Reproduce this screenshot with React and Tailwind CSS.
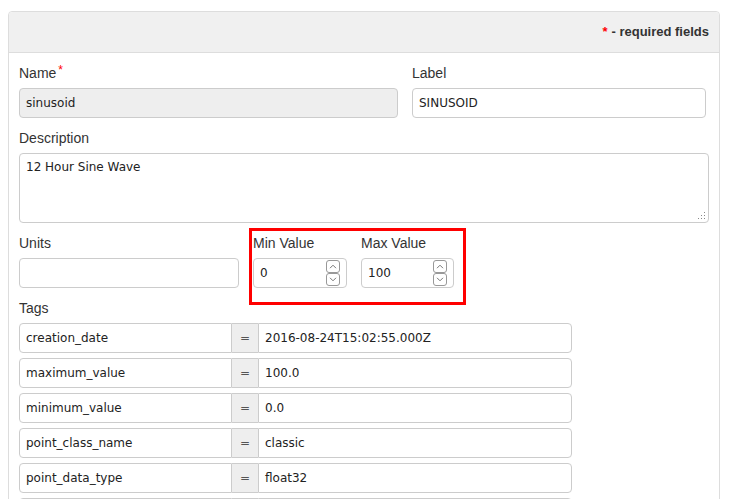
import React from "react";

const tags = [
  ["creation_date", "2016-08-24T15:02:55.000Z"],
  ["maximum_value", "100.0"],
  ["minimum_value", "0.0"],
  ["point_class_name", "classic"],
  ["point_data_type", "float32"],
  ["", ""],
];

const labelCls = "h-[20px] leading-[20px] mb-[5px] text-[14px] text-[#333]";
const inputCls =
  "h-[30px] border border-[#ccc] rounded-[4px] flex items-center px-[6px] text-[12px] text-[#222]";

function Chevron({ up }) {
  return (
    <svg width="8" height="5" viewBox="0 0 8 5" fill="none">
      <path
        d={up ? "M1 4.2 L4 1.2 L7 4.2" : "M1 0.8 L4 3.8 L7 0.8"}
        stroke="#777"
        strokeWidth="1"
      />
    </svg>
  );
}

function NumberField({ value, width }) {
  return (
    <div className={`${inputCls} ${width} justify-between pr-[6px]`}>
      <span>{value}</span>
      <div className="flex flex-col">
        <div className="w-[14px] h-[13px] border border-[#999] rounded-[3px] flex items-center justify-center">
          <Chevron up />
        </div>
        <div className="w-[14px] h-[13px] border border-[#999] rounded-[3px] flex items-center justify-center">
          <Chevron />
        </div>
      </div>
    </div>
  );
}

export default function App() {
  return (
    <div
      className="bg-white min-h-screen pt-[11px] pl-[8px]"
      style={{ fontFamily: '"Liberation Sans", Arial, sans-serif' }}
    >
      <div className="w-[712px] border border-[#ddd] rounded-[4px]">
        <div className="h-[41px] bg-[#f0f0f0] border-b border-[#ddd] rounded-t-[4px] px-[10px] flex items-center justify-end text-[13px] font-bold text-[#333]">
          <span className="text-[#f00] mr-[4px]">*</span>- required fields
        </div>

        <div className="pl-[10px] pr-[10px] pt-[10px] pb-[10px]">
          <div className="flex gap-[14px] mb-[10px]">
            <div className="w-[379px]">
              <div className={labelCls}>
                Name<span className="text-[#f00] text-[12px] relative -top-[4px] ml-[2px]">*</span>
              </div>
              <div
                className={`${inputCls} bg-[#eee]`}
                style={{ fontFamily: '"DejaVu Sans", Verdana, sans-serif' }}
              >
                sinusoid
              </div>
            </div>
            <div className="w-[294px]">
              <div className={labelCls}>Label</div>
              <div
                className={inputCls}
                style={{ fontFamily: '"DejaVu Sans", Verdana, sans-serif' }}
              >
                SINUSOID
              </div>
            </div>
          </div>

          <div className="mb-[10px]">
            <div className={labelCls}>Description</div>
            <div
              className="relative h-[70px] border border-[#ccc] rounded-[4px] px-[6px] pt-[5px] text-[12px] leading-[16px] text-[#222]"
              style={{ fontFamily: '"DejaVu Sans", Verdana, sans-serif' }}
            >
              12 Hour Sine Wave
              <svg className="absolute right-[2px] bottom-[2px]" width="10" height="10" viewBox="0 0 10 10">
                <g fill="#888">
                  <rect x="8" y="2" width="1" height="1" />
                  <rect x="8" y="5" width="1" height="1" />
                  <rect x="5" y="5" width="1" height="1" />
                  <rect x="8" y="8" width="1" height="1" />
                  <rect x="5" y="8" width="1" height="1" />
                  <rect x="2" y="8" width="1" height="1" />
                </g>
              </svg>
            </div>
          </div>

          <div className="flex gap-[14px] mb-[10px]">
            <div className="w-[220px]">
              <div className={labelCls}>Units</div>
              <div className={inputCls}></div>
            </div>
            <div
              className="relative flex gap-[14px]"
              style={{ fontFamily: '"DejaVu Sans", Verdana, sans-serif' }}
            >
              <div>
                <div className={labelCls} style={{ fontFamily: '"Liberation Sans", Arial, sans-serif' }}>
                  Min Value
                </div>
                <NumberField value="0" width="w-[94px]" />
              </div>
              <div>
                <div className={labelCls} style={{ fontFamily: '"Liberation Sans", Arial, sans-serif' }}>
                  Max Value
                </div>
                <NumberField value="100" width="w-[93px]" />
              </div>
              <div className="absolute -left-[4px] -top-[5px] -right-[12px] -bottom-[17px] border-[3px] border-[#f00] pointer-events-none"></div>
            </div>
          </div>

          <div>
            <div className={labelCls}>Tags</div>
            <div
              className="flex flex-col gap-[5px]"
              style={{ fontFamily: '"DejaVu Sans", Verdana, sans-serif' }}
            >
              {tags.map(([k, v], i) => (
                <div key={i} className="flex h-[30px] text-[12px] text-[#222]">
                  <div className="w-[213px] border border-[#ccc] rounded-l-[4px] flex items-center px-[6px]">
                    {k}
                  </div>
                  <div className="w-[26px] bg-[#eee] border-y border-[#ccc] flex items-center justify-center text-[#555]">
                    {k ? "=" : ""}
                  </div>
                  <div className="w-[314px] border border-[#ccc] rounded-r-[4px] flex items-center px-[6px]">
                    {v}
                  </div>
                </div>
              ))}
            </div>
          </div>
        </div>
      </div>
    </div>
  );
}
